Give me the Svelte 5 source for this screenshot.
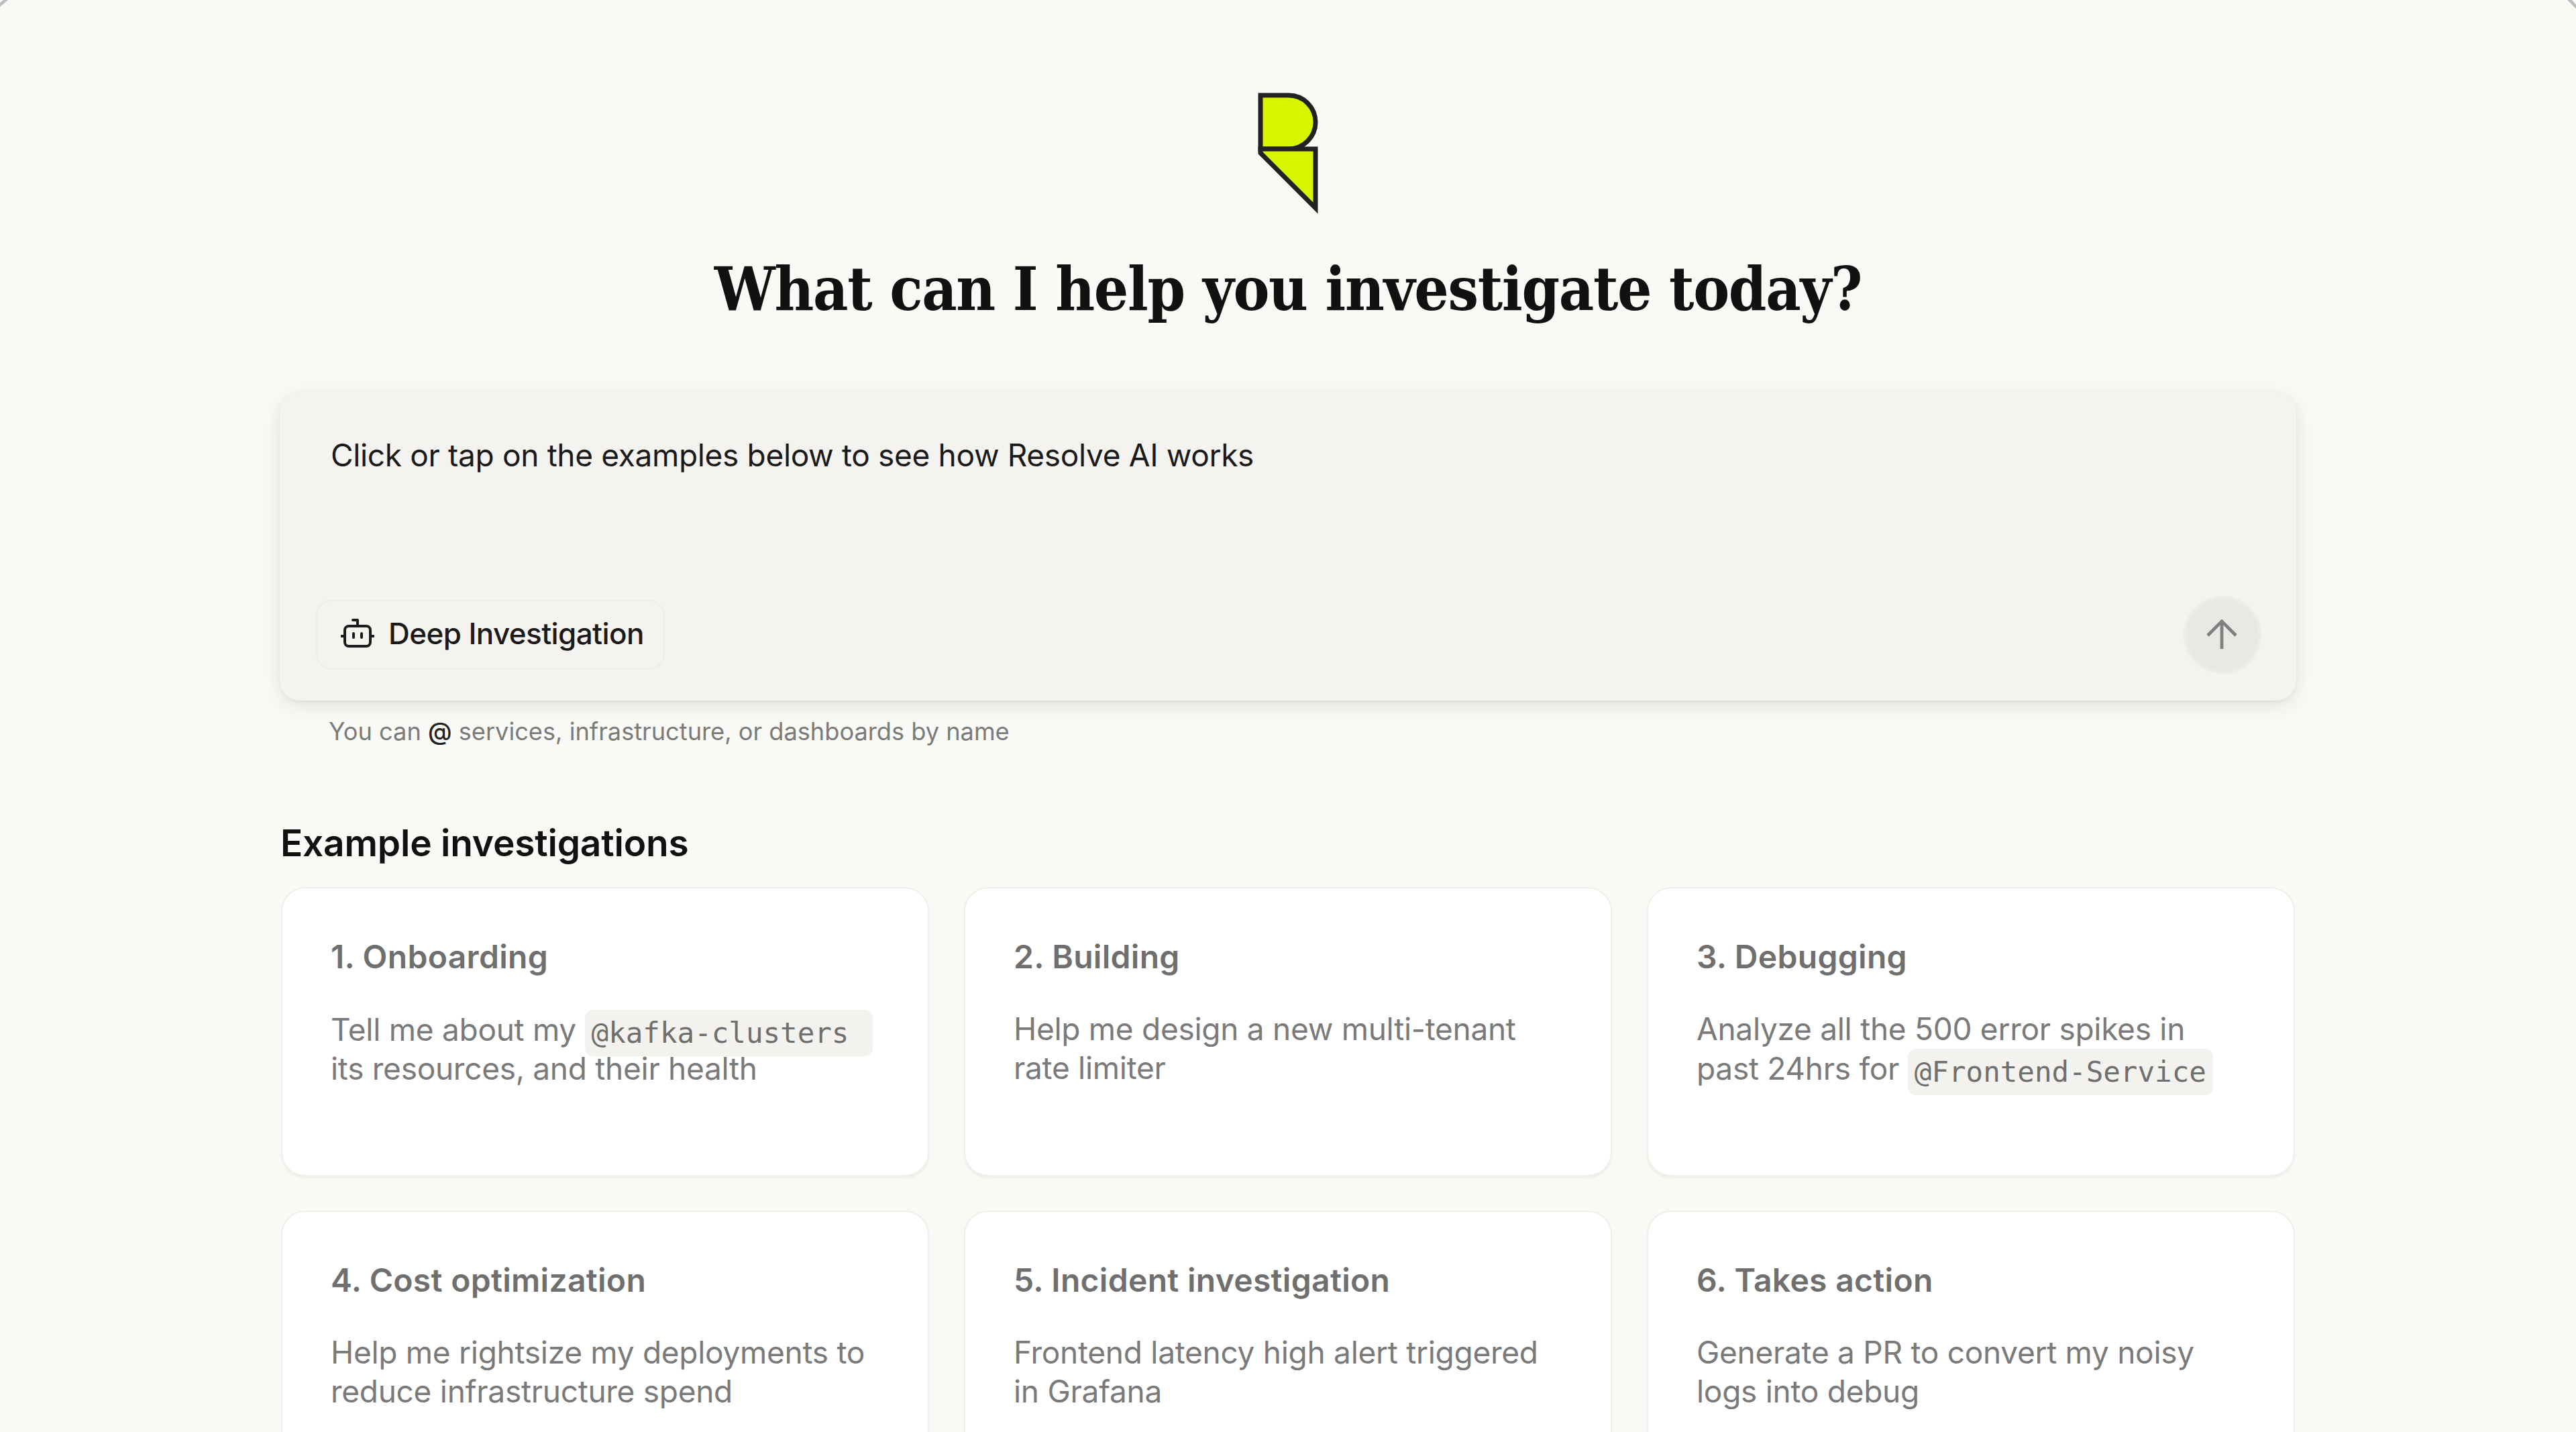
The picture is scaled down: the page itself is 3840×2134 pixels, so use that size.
<script>
  const cards = [
    { title: '1. Onboarding', pre: 'Tell me about my ', code: '@kafka-clusters ', post: ' its resources, and their health' },
    { title: '2. Building', pre: 'Help me design a new multi-tenant rate limiter' },
    { title: '3. Debugging', pre: 'Analyze all the 500 error spikes in past 24hrs for ', code: '@Frontend-Service' },
    { title: '4. Cost optimization', pre: 'Help me rightsize my deployments to reduce infrastructure spend' },
    { title: '5. Incident investigation', pre: 'Frontend latency high alert triggered in Grafana' },
    { title: '6. Takes action', pre: 'Generate a PR to convert my noisy logs into debug' }
  ];
</script>

<div class="page">
  <svg class="corner tl" viewBox="0 0 16 16" aria-hidden="true"><path d="M12 0 0 10V4L5 0Z" /></svg>
  <svg class="corner tr" viewBox="0 0 16 16" aria-hidden="true"><path d="M3 0 16 13V7L10 0Z" /></svg>

  <svg class="logo" viewBox="0 0 90 180" aria-hidden="true">
    <path d="M4 4H46A40 40 0 0 1 46 84H4Z" />
    <path d="M4 84H86V172L4 90Z" />
  </svg>

  <h1>What can I help you investigate today?</h1>

  <section class="composer">
    <p class="prompt">Click or tap on the examples below to see how Resolve AI works</p>
    <div class="actions">
      <button class="mode">
        <svg class="robot" viewBox="0 0 50 44" aria-hidden="true">
          <rect x="6" y="11" width="38" height="30" rx="6" />
          <path d="M25 11V2H18M6 26H1.5M44 26H48.5M19 22V28M31 22V28" />
        </svg>
        Deep Investigation
      </button>
      <button class="send" aria-label="Send">
        <svg viewBox="0 0 50 48" aria-hidden="true"><path d="M25 46V3M3 25 25 3 47 25" /></svg>
      </button>
    </div>
  </section>

  <p class="hint">You can <b>@</b> services, infrastructure, or dashboards by name</p>

  <h2>Example investigations</h2>

  <div class="grid">
    {#each cards as c}
      <article class="card">
        <h3>{c.title}</h3>
        <p>{c.pre}{#if c.code}<code>{c.code}</code>{/if}{c.post ?? ''}</p>
      </article>
    {/each}
  </div>
</div>

<style>
  :global(body) {
    margin: 0;
    background: #f9f9f5;
  }
  .page {
    position: relative;
    height: 2134px;
    overflow: hidden;
    box-sizing: border-box;
    padding-top: 138px;
    background: #f9f9f5;
    font-family: Inter, "Noto Sans", sans-serif;
    display: flex;
    flex-direction: column;
    align-items: center;
  }
  .corner {
    position: absolute;
    top: 0;
    width: 16px;
    height: 16px;
    fill: #bcbcbc;
  }
  .tl { left: 0; }
  .tr { right: 0; }
  .logo {
    display: block;
    width: 90px;
    height: 180px;
    fill: #d8f500;
    stroke: #222;
    stroke-width: 7;
    stroke-linejoin: miter;
    overflow: visible;
    flex: none;
  }
  h1 {
    margin: 52px 0 0;
    font-family: "DejaVu Serif Condensed", "DejaVu Serif", serif;
    font-weight: 700;
    font-stretch: condensed;
    font-size: 90px;
    line-height: 120px;
    color: #111;
    letter-spacing: -1.3px;
    white-space: nowrap;
  }
  .composer {
    box-sizing: border-box;
    width: 3006px;
    height: 460px;
    margin-top: 94px;
    padding: 66px 52px 40px 54px;
    border-radius: 30px;
    background: #f4f3ef;
    box-shadow: 0 8px 30px rgba(0, 0, 0, 0.09), 0 3px 6px rgba(0, 0, 0, 0.05);
    display: flex;
    flex-direction: column;
    justify-content: space-between;
    flex: none;
  }
  .prompt {
    margin: 0 0 0 22px;
    font-size: 46px;
    line-height: 56px;
    letter-spacing: -0.34px;
    color: #1a1a1a;
  }
  .actions {
    display: flex;
    justify-content: space-between;
    align-items: center;
  }
  button {
    font-family: inherit;
    padding: 0;
    cursor: pointer;
  }
  .mode {
    display: flex;
    align-items: center;
    gap: 21px;
    box-sizing: border-box;
    width: 520px;
    height: 104px;
    padding-left: 35px;
    padding-bottom: 4px;
    border: 2px solid #ecece8;
    border-radius: 24px;
    background: transparent;
    font-size: 44px;
    font-weight: 500;
    letter-spacing: -0.6px;
    color: #1a1a1a;
  }
  .robot {
    width: 50px;
    height: 44px;
    fill: none;
    stroke: #1c1c1c;
    stroke-width: 4;
    stroke-linecap: round;
    stroke-linejoin: round;
    flex: none;
  }
  .send {
    box-sizing: border-box;
    width: 116px;
    height: 116px;
    border: 4px solid #ecece8;
    border-radius: 50%;
    background: #e8e8e5;
    display: flex;
    align-items: center;
    justify-content: center;
  }
  .send svg {
    width: 48px;
    height: 46px;
    margin-right: 3px;
    fill: none;
    stroke: #808080;
    stroke-width: 5;
  }
  .hint {
    align-self: flex-start;
    margin: 23px 0 0 490px;
    font-size: 36.2px;
    line-height: 46px;
    color: #7b7b7b;
  }
  .hint b {
    font-weight: 500;
    color: #222;
  }
  h2 {
    align-self: flex-start;
    margin: 108px 0 0 418px;
    font-size: 55px;
    font-weight: 600;
    line-height: 70px;
    letter-spacing: -0.2px;
    color: #111;
  }
  .grid {
    width: 3002px;
    margin-top: 31px;
    display: grid;
    grid-template-columns: repeat(3, 1fr);
    grid-auto-rows: 431px;
    column-gap: 52px;
    row-gap: 51px;
    flex: none;
  }
  .card {
    box-sizing: border-box;
    padding: 74px 72px 0 72px;
    border: 2px solid #efefeb;
    border-radius: 36px;
    background: #fff;
    box-shadow: 0 3px 3px rgba(0, 0, 0, 0.05);
  }
  h3 {
    margin: 0;
    font-size: 48px;
    font-weight: 600;
    line-height: 56px;
    letter-spacing: 0.3px;
    color: #6f6f6f;
  }
  .card p {
    margin: 50px 0 0;
    font-size: 46px;
    line-height: 58px;
    letter-spacing: -0.28px;
    color: #7a7a7a;
  }
  code {
    position: relative;
    top: 7px;
    vertical-align: 4px;
    font-family: "DejaVu Sans Mono", monospace;
    font-size: 42.5px;
    letter-spacing: 0;
    white-space: pre;
    color: #6f6f6f;
    background: #f3f2ee;
    padding: 10px;
    border-radius: 12px;
  }
</style>
